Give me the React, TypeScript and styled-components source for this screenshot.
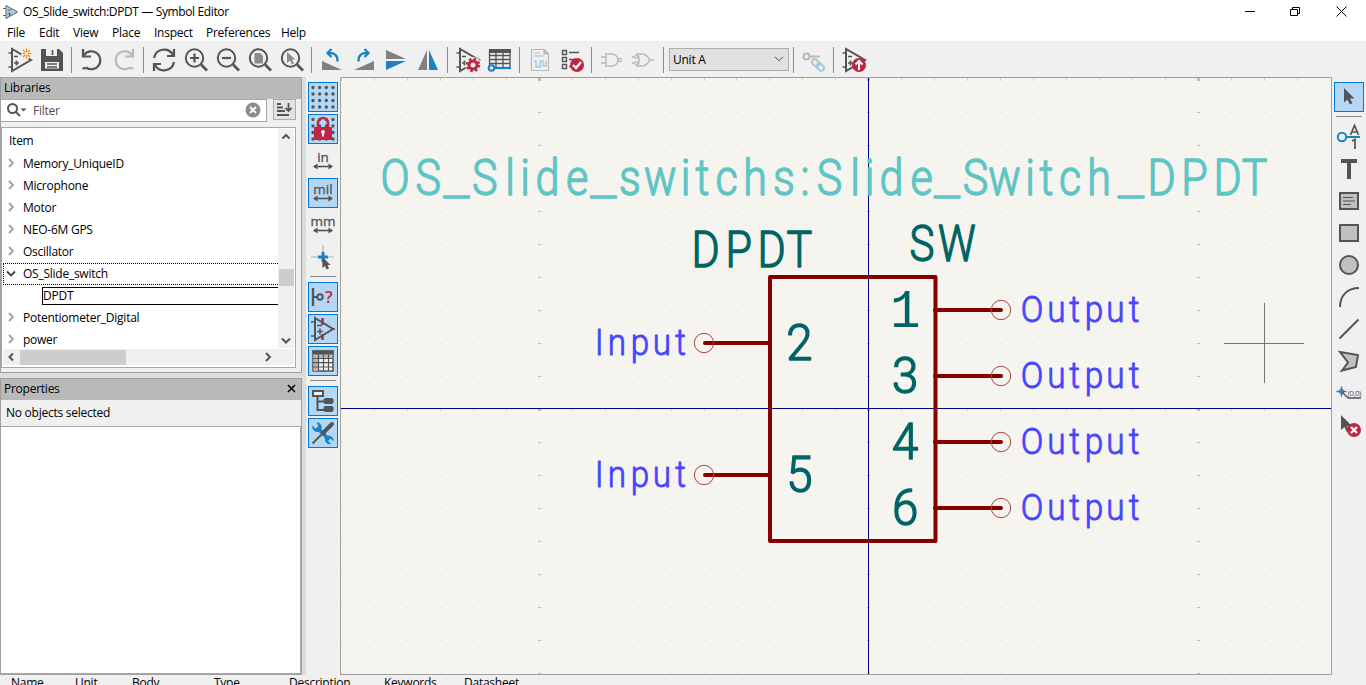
import React from 'react';
import styled, { createGlobalStyle } from 'styled-components';

const DARK = '#545454';
const BLUE = '#1a81c4';
const RED = '#bf2641';

const GlobalStyle = createGlobalStyle`
  * { box-sizing: border-box; }
  body {
    margin: 0;
    overflow: hidden;
    font-family: 'Open Sans', 'Noto Sans', sans-serif;
    font-size: 12px;
    letter-spacing: -0.25px;
    color: #000;
  }
  svg { display: block; flex: none; }
`;

const Window = styled.div`
  width: 1366px;
  height: 685px;
  display: flex;
  flex-direction: column;
  background: #f0f0f0;
  overflow: hidden;
`;

const TitleBar = styled.header`
  height: 23px;
  flex: none;
  display: flex;
  align-items: center;
  background: #fff;
  padding-left: 3px;
`;

const Title = styled.span`
  margin-left: 5px;
  flex: 1;
  white-space: nowrap;
  letter-spacing: -0.37px;
`;

const MenuBar = styled.nav`
  height: 18px;
  flex: none;
  display: flex;
  background: #fff;
`;

const MenuItem = styled.span<{ $w: number }>`
  width: ${(p) => p.$w}px;
  line-height: 19px;
  padding-left: 7px;
  white-space: nowrap;
`;

const TopToolbar = styled.div`
  height: 36px;
  flex: none;
  display: flex;
  align-items: center;
  padding: 2px 0 0 4px;
`;

const VSeparator = styled.i`
  width: 1px;
  height: 26px;
  margin: 0 4px 0 3px;
  background: #8c8c8c;
`;

const HSeparator = styled.i`
  height: 1px;
  width: 26px;
  margin: 3px 0 4px;
  background: #8c8c8c;
`;

const ToolButton = styled.span<{ $active?: boolean }>`
  width: 32px;
  height: 32px;
  flex: none;
  display: flex;
  align-items: center;
  justify-content: center;
  background: ${(p) => (p.$active ? '#b3d7f5' : 'transparent')};
  background-clip: content-box;
  padding: 1px;
  box-shadow: ${(p) => (p.$active ? 'inset 0 0 0 1px #f0f0f0, inset 0 0 0 2px #0078d7' : 'none')};
  svg { margin: -1px; }
`;

const UnitSelect = styled.div`
  width: 120px;
  height: 23px;
  margin: -2px 1px 0;
  padding: 0 4px 0 3px;
  display: flex;
  align-items: center;
  justify-content: space-between;
  background: #e1e1e1;
  border: 1px solid #adadad;
`;

const Body = styled.main`
  height: 598px;
  flex: none;
  display: flex;
`;

const SideColumn = styled.aside`
  width: 306px;
  display: flex;
  flex-direction: column;
  gap: 5px;
  background: #dcdcdc;
  padding-right: 4px;
`;

const Panel = styled.section<{ $h: number }>`
  height: ${(p) => p.$h}px;
  flex: none;
  display: flex;
  flex-direction: column;
  border: 1px solid #a0a0a0;
  background: #f0f0f0;
`;

const PanelHeader = styled.h2`
  height: 21px;
  flex: none;
  margin: 0;
  padding: 0 5px 2px 3px;
  display: flex;
  align-items: center;
  justify-content: space-between;
  font-size: 12px;
  font-weight: 400;
  background: #b9b9b9;
`;

const FilterRow = styled.div`
  display: flex;
  align-items: center;
  height: 23px;
  gap: 6px;
`;

const FilterField = styled.div`
  width: 266px;
  height: 23px;
  display: flex;
  align-items: center;
  padding: 0 5px 1px 5px;
  background: #fff;
  border: 1px solid #a8a8a8;
  border-left: 0;
  color: #4d4d4d;
`;

const FilterText = styled.span`
  flex: 1;
  margin-left: 6px;
`;

const SortButton = styled.div`
  width: 23px;
  height: 21px;
  margin-top: -2px;
  background: #e3e3e3;
  border: 1px solid #adadad;
`;

const ListBox = styled.div`
  width: 295px;
  height: 241px;
  margin-top: 5px;
  border: 1px solid #a5a8ad;
  background: #fff;
  padding: 1px;
  display: flex;
  flex-direction: column;
`;

const ListTop = styled.div`
  display: flex;
  height: 220px;
`;

const Tree = styled.div`
  width: 275px;
  height: 220px;
  overflow: hidden;
`;

const TreeHead = styled.div`
  height: 24px;
  padding-left: 6px;
  line-height: 23px;
`;

const TreeRow = styled.div<{ $focused?: boolean }>`
  height: 22px;
  display: flex;
  align-items: center;
  border: 1px dotted ${(p) => (p.$focused ? '#000' : 'transparent')};
  border-right: 0;
  svg { margin: -1px 0 1px -1px; }
`;

const RowLabel = styled.span`
  margin: -2px 0 0 4px;
`;

const ChildRow = styled.div`
  height: 18px;
  margin: 2px 0 2px 39px;
  border: 1px solid #000;
  border-right: 0;
  line-height: 15px;
`;

const VScroll = styled.div`
  width: 16px;
  height: 219px;
  background: #f0f0f0;
  display: flex;
  flex-direction: column;
  align-items: center;
  justify-content: space-between;
`;

const VThumb = styled.i`
  width: 15px;
  height: 17px;
  margin-top: 77px;
  background: #cdcdcd;
`;

const HScroll = styled.div`
  height: 16px;
  width: 291px;
  background: #f0f0f0;
  display: flex;
  align-items: center;
`;

const HThumb = styled.i`
  width: 106px;
  height: 15px;
  margin: 0 134px 0 1px;
  background: #cdcdcd;
`;

const Notice = styled.div`
  height: 26px;
  flex: none;
  padding-left: 5px;
  line-height: 26px;
`;

const PropertyGrid = styled.div`
  flex: 1;
  background: #fff;
  border: 1px solid #a5a8ad;
  border-left: 0;
`;

const SideToolbar = styled.div<{ $w: number }>`
  width: ${(p) => p.$w}px;
  flex: none;
  padding-top: 4px;
  display: flex;
  flex-direction: column;
  align-items: center;
`;

const Canvas = styled.div`
  width: 992px;
  height: 598px;
  flex: none;
  overflow: hidden;
`;

const StatusBar = styled.footer`
  height: 10px;
  flex: none;
  display: flex;
  overflow: hidden;
  padding-left: 11px;
`;

const StatusField = styled.span<{ $w: number }>`
  width: ${(p) => p.$w}px;
  line-height: 16px;
  white-space: nowrap;
`;

/* ---------- icons: a 32px cell each ---------- */

const Cell = ({ children, faded }: { children: React.ReactNode; faded?: boolean }) => (
  <svg width="32" height="32" viewBox="0 0 32 32" fill="none" stroke={DARK} strokeWidth="2" opacity={faded ? 0.35 : 1}>
    {children}
  </svg>
);

const OpAmp = () => (
  <>
    <path d="M8 5v22L27 16z" />
    <path d="M4.500 9H8M4.500 23H8M10 12.500h4M10 19h5M12.500 16.500v5" strokeWidth="1.700" />
  </>
);

const GridDots = () => (
  <path
    d="M6 6.500h24M6 13h24M6 19.500h24M6 26h24"
    strokeWidth="3.400"
    strokeLinecap="round"
    strokeDasharray="0 6.650"
  />
);

const icons: Record<string, React.ReactNode> = {
  newSymbol: (
    <Cell>
      <OpAmp />
      <circle cx="22.500" cy="9.500" r="5.500" fill="#f0f0f0" stroke="none" />
      <path d="M22.500 4.500v10M17.500 9.500h10M19 6l7 7M26 6l-7 7" stroke="#f29100" strokeWidth="1.200" />
      <circle cx="22.500" cy="9.500" r="1.500" fill="#fff" stroke="none" />
    </Cell>
  ),
  save: (
    <Cell>
      <path d="M5 5h18l4 4v18H5z" fill={DARK} stroke="none" />
      <path d="M10 5h11v7H10zM9 18h14v6.500H9z" fill="#f0f0f0" stroke="none" />
      <path d="M16.500 6v5M11 20h10M11 23h10" strokeWidth="1.700" />
    </Cell>
  ),
  undo: (
    <Cell>
      <path d="M8 11A9 9 0 1 1 10 23.500M7 5v7.500h8M6.500 24.300L12 24" strokeWidth="2.200" />
    </Cell>
  ),
  redo: (
    <Cell faded>
      <path d="M24 11A9 9 0 1 0 22 23.500M25 5v7.500h-8M25.500 24.300L20 24" strokeWidth="2.200" />
    </Cell>
  ),
  refresh: (
    <Cell>
      <path d="M6 14A10.200 10.200 0 0 1 25 11M26 18A10.200 10.200 0 0 1 7 21" strokeWidth="2.200" />
      <path d="M26 5v7h-7M6 27v-7h7" strokeWidth="2.200" />
    </Cell>
  ),
  zoomIn: (
    <Cell>
      <circle cx="14.500" cy="14" r="8.700" />
      <path d="M21 20.500l6 6" strokeWidth="2.700" />
      <path d="M14.500 9.500v9M10 14h9" strokeWidth="2.200" />
    </Cell>
  ),
  zoomOut: (
    <Cell>
      <circle cx="14.500" cy="14" r="8.700" />
      <path d="M21 20.500l6 6" strokeWidth="2.700" />
      <path d="M10 14h9" strokeWidth="2.200" />
    </Cell>
  ),
  zoomPage: (
    <Cell>
      <circle cx="14.500" cy="14" r="8.700" />
      <path d="M21 20.500l6 6" strokeWidth="2.700" />
      <path d="M10.500 9h5.500l3 3v7.500h-8.500z" fill="#8c8c8c" stroke="none" />
    </Cell>
  ),
  zoomPointer: (
    <Cell>
      <circle cx="14.500" cy="14" r="8.700" />
      <path d="M21 20.500l6 6" strokeWidth="2.700" />
      <path d="M11 8v11l3-2.500 2 4 2-1-2-4h3.500z" fill="#8c8c8c" stroke="none" />
    </Cell>
  ),
  rotateLeft: (
    <Cell>
      <path d="M6 17v9h20z" fill="#808080" stroke="none" />
      <path d="M21.500 17.500c.500-6-3-9-9-8.500M15.500 5l-4 4 4 4" stroke={BLUE} strokeWidth="2.300" />
    </Cell>
  ),
  rotateRight: (
    <Cell>
      <path d="M26 17v9H6z" fill="#808080" stroke="none" />
      <path d="M10.500 17.500c-.500-6 3-9 9-8.500M16.500 5l4 4-4 4" stroke={BLUE} strokeWidth="2.300" />
    </Cell>
  ),
  flipV: (
    <Cell>
      <path d="M6 6v9h20z" fill="#808080" stroke="none" />
      <path d="M6 26v-9h20z" fill={BLUE} stroke="none" />
    </Cell>
  ),
  flipH: (
    <Cell>
      <path d="M15 6v20H6z" fill="#808080" stroke="none" />
      <path d="M17 6v20h9z" fill={BLUE} stroke="none" />
    </Cell>
  ),
  symbolProps: (
    <Cell>
      <OpAmp />
      <circle cx="21" cy="21" r="4" stroke="#f0f0f0" strokeWidth="8" />
      <circle cx="21" cy="21" r="6" stroke={RED} strokeWidth="2.500" strokeDasharray="2.400 2.310" />
      <circle cx="21" cy="21" r="4" stroke={RED} strokeWidth="3" />
    </Cell>
  ),
  pinTable: (
    <Cell>
      <path d="M5.500 6v18M26 6v17M12 6v17M19 6v17M5 11.500h21M5 15.500h21M5 19.500h21" strokeWidth="1.300" />
      <path d="M5 5h22v4H5z" fill={DARK} stroke="none" />
      <path d="M10 24h17" stroke={BLUE} strokeWidth="2.300" />
      <circle cx="7.500" cy="24" r="2.800" fill="#f0f0f0" stroke={BLUE} />
    </Cell>
  ),
  datasheet: (
    <Cell faded>
      <path d="M7.500 5.500h13l4 4v17h-17zM20 5v5h5" strokeWidth="1.200" />
      <path d="M20 5v5h5z" fill={DARK} stroke="none" />
      <path d="M10 9h6M10 12h10" strokeWidth="1.200" />
      <path d="M10 17h2v6h4v-6h3v5h3v-4h1" stroke={BLUE} strokeWidth="1.500" />
    </Cell>
  ),
  erc: (
    <Cell>
      <path d="M6.500 6.500h4v4h-4zM6.500 13.500h4v4h-4zM6.500 20.500h4v4h-4z" strokeWidth="1.400" />
      <path d="M13 8.500h10M13 15.500h7M13 22.500h4" strokeWidth="1.400" />
      <circle cx="21" cy="21" r="7" fill={RED} stroke="none" />
      <path d="M17 21l3 3 5-6" stroke="#fff" strokeWidth="2.300" />
    </Cell>
  ),
  andGate: (
    <Cell faded>
      <path d="M10 10h6a6 6 0 0 1 0 12h-6zM5 13h5M5 19h5" strokeWidth="1.400" />
      <circle cx="23.700" cy="16" r="1.600" strokeWidth="1.300" />
    </Cell>
  ),
  orGate: (
    <Cell faded>
      <path d="M9 10h6c3 0 5 3 7 6-2 3-4 6-7 6H9c3-4 3-8 0-12zM4 13h2M4 19h2M22 16h4" strokeWidth="1.400" />
      <circle cx="8" cy="13" r="1.500" strokeWidth="1.200" />
      <circle cx="8" cy="19" r="1.500" strokeWidth="1.200" />
    </Cell>
  ),
  syncPins: (
    <Cell faded>
      <circle cx="8.500" cy="12.500" r="3" />
      <path d="M11.500 12.500H22" />
      <g stroke={BLUE}>
        <rect x="13.500" y="16" width="8" height="5.500" rx="2.700" transform="rotate(42 17.500 19)" />
        <rect x="18.500" y="20.500" width="8" height="5.500" rx="2.700" transform="rotate(42 22.500 23)" />
      </g>
    </Cell>
  ),
  export: (
    <Cell>
      <OpAmp />
      <circle cx="21" cy="21" r="7" fill={RED} stroke="none" />
      <path d="M21 26v-8M17.500 20.500l3.500-3.500 3.500 3.500" stroke="#fff" />
    </Cell>
  ),
  grid: (
    <Cell>
      <GridDots />
    </Cell>
  ),
  gridLock: (
    <Cell>
      <GridDots />
      <path d="M11 15v-5a5 5 0 0 1 10 0v5" stroke={RED} strokeWidth="2.600" />
      <rect x="7" y="14" width="18" height="13" rx="1" fill={RED} stroke="none" />
      <circle cx="16" cy="19" r="1.900" fill="#e4eefa" stroke="none" />
      <path d="M16 19v4.500" stroke="#e4eefa" />
    </Cell>
  ),
  cursorShape: (
    <Cell>
      <path d="M16 4v22M4 16h23" stroke="#b0b0b0" strokeWidth="1.200" />
      <path d="M16 11v10M11 16h10" stroke={BLUE} strokeWidth="3" />
      <path d="M15.500 16v11l2.500-2 1.500 3.500 2.500-1-1.500-3.500h3z" fill={DARK} stroke="none" />
    </Cell>
  ),
  pinType: (
    <Cell>
      <path d="M6 7v18" strokeWidth="2.400" />
      <path d="M6 16h4" />
      <circle cx="13" cy="16" r="2.700" />
      <text x="18" y="22" fontFamily="Open Sans" fontWeight="600" fontSize="17" fill={RED} stroke="none">?</text>
    </Cell>
  ),
  hiddenPins: (
    <Cell>
      <path d="M15.500 5v7M15.500 21v6" stroke={RED} strokeWidth="2.500" />
      <path d="M8 5v22L26 16z" />
      <path d="M4 9h4M4 23h4M24 16h4M10 12.500h5M10 18.500h6M13 15.500v6" strokeWidth="1.600" />
    </Cell>
  ),
  table: (
    <Cell>
      <rect x="6" y="6" width="20" height="20" fill="#f5f5f5" strokeWidth="1.500" />
      <path d="M6.500 9h19v4.500H11.500V26h-5z" fill="#b9b9b9" stroke="none" />
      <path d="M5.500 7.500h21" strokeWidth="4" />
      <path d="M11.500 7v19M16.500 7v19M21.500 7v19M6 13.500h20M6 17.700h20M6 22h20" strokeWidth="1.200" />
    </Cell>
  ),
  treeView: (
    <Cell>
      <path d="M10.500 11v14H18M10.500 16.500H18" />
      <rect x="6" y="6" width="10" height="5" fill="#f5f5f5" />
      <path d="M18 13h7l1.500 1.500v3L25 19h-7l-1.500-1.500v-3z" fill={DARK} stroke="none" />
      <path d="M18 21h7l1.500 1.500v3L25 27h-7l-1.500-1.500v-3z" fill={DARK} stroke="none" />
    </Cell>
  ),
  tools: (
    <Cell>
      <path
        d="M9.500 5.300a5.300 5.300 0 0 1 5 7.200l6 6a5.300 5.300 0 0 1 6.200 6l-3-3-2.600 2.600 3 3a5.300 5.300 0 0 1-6.200-6.200l-6-6a5.300 5.300 0 0 1-6.500-6.300l3.200 3.200 2.700-2.700z"
        fill={BLUE}
        stroke="none"
      />
      <path d="M5.500 26.500l11-11" strokeWidth="1.800" />
      <path d="M16 16l9-9" strokeWidth="4" strokeLinecap="round" />
    </Cell>
  ),
  pointer: (
    <Cell>
      <path d="M11 7v14.500l3.500-3 2.300 5 2.600-1.200-2.400-4.800h4.500z" fill={DARK} stroke="none" />
    </Cell>
  ),
  addPin: (
    <Cell>
      <circle cx="9" cy="16" r="4.200" stroke={BLUE} />
      <path d="M13 16h14" stroke={BLUE} />
      <path d="M17.500 14L21.500 4.500 25.500 14M19 11h5M19 20l3-1.500V28" strokeWidth="1.700" />
    </Cell>
  ),
  addText: (
    <Cell>
      <path d="M8 8h16M16 8v18" strokeWidth="4" />
    </Cell>
  ),
  textBox: (
    <Cell>
      <rect x="7" y="8" width="18" height="16" fill="#c0c0c0" />
      <path d="M10 12.500h10M10 16h12M10 19.500h8" strokeWidth="1.200" />
    </Cell>
  ),
  rect: (
    <Cell>
      <rect x="7" y="8" width="18" height="16" fill="#c0c0c0" />
    </Cell>
  ),
  circle: (
    <Cell>
      <circle cx="16" cy="16" r="9" fill="#c0c0c0" />
    </Cell>
  ),
  arc: (
    <Cell>
      <path d="M7 26C7 15 14 7 26 7" />
    </Cell>
  ),
  line: (
    <Cell>
      <path d="M6.500 25.500l19-19" />
    </Cell>
  ),
  polygon: (
    <Cell>
      <path d="M7 7l18 3-2 12-14 3.500 6-8z" fill="#c0c0c0" />
    </Cell>
  ),
  anchor: (
    <Cell>
      <path d="M8.500 9.500v10M3.500 14.500h10" stroke={BLUE} strokeWidth="1.500" />
      <circle cx="8.500" cy="14.500" r="2.300" stroke={BLUE} strokeWidth="1" />
      <path d="M9 15l6 6h13" strokeWidth="1.300" />
      <text x="14.500" y="19" fontFamily="Open Sans" fontSize="8" letterSpacing="-.500" fill={DARK} stroke="none">(0,0)</text>
    </Cell>
  ),
  deleteTool: (
    <Cell>
      <path d="M8 6v15l3.500-3 2.300 5 2.600-1.200-2.400-4.800h5z" fill={DARK} stroke="none" />
      <circle cx="21" cy="21" r="7" fill={RED} stroke="none" />
      <path d="M18 18l6 6M24 18l-6 6" stroke="#fff" strokeWidth="2.200" />
    </Cell>
  ),
};

const unitIcon = (label: string) => (
  <Cell>
    <text x="16" y="17" textAnchor="middle" fontFamily="Open Sans" fontSize="13.500" fontWeight="500" fill={DARK} stroke={DARK} strokeWidth=".3" letterSpacing="0">
      {label}
    </text>
    <path d="M7 21.500h18" strokeWidth="1.600" />
    <path d="M10.500 18.500L6 21.500l4.500 3zM21.500 18.500l4.500 3-4.500 3z" fill={DARK} stroke="none" />
  </Cell>
);
icons.inches = unitIcon('in');
icons.mils = unitIcon('mil');
icons.mm = unitIcon('mm');

const Tools = ({ names, active = [] }: { names: string[]; active?: string[] }) => (
  <>
    {names.map((n) => (
      <ToolButton key={n} $active={active.includes(n)}>
        {icons[n]}
      </ToolButton>
    ))}
  </>
);

const Chevron = ({ dir, color = '#555', w = 2 }: { dir: 'up' | 'down' | 'left' | 'right'; color?: string; w?: number }) => {
  const d = {
    up: 'M4.500 9.500L8 6l3.500 3.500',
    down: 'M4 6.500l4 4 4-4',
    left: 'M10 4.500L6.500 8l3.500 3.500',
    right: 'M6 4l4 4-4 4',
  }[dir];
  return (
    <svg width="16" height="16" viewBox="0 0 16 16" fill="none" stroke={color} strokeWidth={w}>
      <path d={d} />
    </svg>
  );
};

/* ---------- schematic sheet, in window coordinates ---------- */

type LetteringProps = {
  text: string;
  centers: number[];
  y: number;
  size: number;
  squeeze: number;
  color: string;
  weight?: number;
};

const Lettering = ({ text, centers, y, size, squeeze, color, weight = 1.4 }: LetteringProps) => (
  <text
    transform={`scale(${squeeze} 1)`}
    textAnchor="middle"
    fontFamily="Roboto"
    fontWeight="300"
    fontSize={size}
    letterSpacing="0"
    fill={color}
    stroke={color}
    strokeWidth={weight}
    strokeLinejoin="round"
  >
    {text.split('').map((c, i) => {
      const wide = c === '_';
      const footed = c === '1';
      return (
        <tspan
          key={i}
          x={centers[i] / squeeze}
          y={wide ? y - 8.5 : y}
          fontFamily={wide ? 'DejaVu Sans Mono' : footed ? 'Liberation Mono' : 'Roboto'}
          fontWeight={footed ? 400 : 300}
          fontSize={footed ? size * 1.06 : size}
          strokeWidth={footed ? 0 : weight}
        >
          {c}
        </tspan>
      );
    })}
  </text>
);

const TEAL = '#5fc4c4';
const GREEN = '#006464';
const PIN = '#840000';
const NAME = '#4646ff';

const libId = 'OS_Slide_switchs:Slide_Switch_DPDT';
const libIdCenters = [
  395, 428.3, 456.5, 484.7, 510, 525.2, 547.5, 577, 603.5, 630, 660.3, 685.5, 702.5, 726.5, 755, 784, 805,
  829.5, 855, 869.5, 891.5, 921.5, 947, 975.5, 1004.5, 1030, 1046.5, 1070, 1099, 1131, 1161.5, 1194.5, 1227.5, 1254.5,
];

const outputs = [
  { n: '1', y: 310 },
  { n: '3', y: 376 },
  { n: '4', y: 442 },
  { n: '6', y: 508 },
];
const inputs = [
  { n: '2', y: 343 },
  { n: '5', y: 475 },
];

const columns = Array.from({ length: 30 }, (_, i) => i - 1);
const rows = Array.from({ length: 19 }, (_, i) => i);

const Sheet = () => (
  <svg width="992" height="598" viewBox="340 77 992 598" fill="none">
    <rect x="340" y="77" width="992" height="598" fill="#f5f4ef" />
    {rows.map((r) =>
      columns.map((c) => {
        const major = (c - 5) % 10 === 0;
        const tall = r === 0 || r === 10;
        return (
          <rect
            key={`${r}-${c}`}
            x={Math.round(374 + c * 32.95) - (major ? 1 : 0)}
            y={Math.round(79 + r * 33) - (tall ? 1 : 0)}
            width={major ? 3 : 1}
            height={tall ? 3 : 1}
            fill={major ? '#bdbdba' : '#d2d1cd'}
          />
        );
      }),
    )}
    <path d="M868.500 77V675M340 408.500H1332" stroke="#000084" />
    <Lettering text={libId} centers={libIdCenters} y={194.7} size={50} squeeze={0.86} color={TEAL} />
    <Lettering text="DPDT" centers={[705.5, 738.7, 771.5, 799.3]} y={267.5} size={50} squeeze={0.86} color={GREEN} />
    <Lettering text="SW" centers={[922, 956.8]} y={261} size={50} squeeze={0.84} color={GREEN} />
    <rect x="770" y="277" width="165.500" height="264" stroke={PIN} strokeWidth="4" strokeLinejoin="round" />
    {outputs.map((p) => (
      <g key={p.n}>
        <path d={`M935 ${p.y}H1001`} stroke={PIN} strokeWidth="4" strokeLinecap="round" />
        <circle cx="1001" cy={p.y} r="9.700" stroke="#a84444" />
        <Lettering text={p.n} centers={[905.3]} y={p.y + 16.7} size={50} squeeze={0.95} color={GREEN} />
        <Lettering text="Output" centers={[1032, 1056.5, 1074.5, 1094, 1115.5, 1134]} y={p.y + 12} size={37} squeeze={0.9} color={NAME} weight={0.9} />
      </g>
    ))}
    {inputs.map((p) => (
      <g key={p.n}>
        <path d={`M770 ${p.y}H705`} stroke={PIN} strokeWidth="4" strokeLinecap="round" />
        <circle cx="704" cy={p.y} r="9.700" stroke="#a84444" />
        <Lettering text={p.n} centers={[799.3]} y={p.y + 16.7} size={50} squeeze={0.95} color={GREEN} />
        <Lettering text="Input" centers={[599.3, 617, 640, 662, 680.7]} y={p.y + 12} size={37} squeeze={0.9} color={NAME} weight={0.9} />
      </g>
    ))}
    <path d="M1264.500 303V383M1224 343.500H1304" stroke="#77776f" />
    <path d="M340.500 675V77.500H1331.500V674.500H340" stroke="#a0a0a0" />
  </svg>
);

const before = ['Memory_UniqueID', 'Microphone', 'Motor', 'NEO-6M GPS', 'Oscillator'];
const after = ['Potentiometer_Digital', 'power'];

const Branch = ({ label }: { label: string }) => (
  <TreeRow>
    <Chevron dir="right" color="#a0a0a0" w={1.8} />
    <RowLabel>{label}</RowLabel>
  </TreeRow>
);

const App = () => (
  <Window>
    <GlobalStyle />
    <TitleBar>
      <svg width="15" height="16" viewBox="0 0 15 16">
        <path d="M3 1.500v13L14.500 8z" fill="#b8cbd8" stroke="#5b6770" />
        <path d="M0 4.500h3M0 11.500h3M5 6h3" stroke="#5b6770" />
        <path d="M4.500 10h4M6.500 8v4" stroke={BLUE} />
      </svg>
      <Title>OS_Slide_switch:DPDT — Symbol Editor</Title>
      <svg width="121" height="22" viewBox="1245 0 121 22" fill="none" stroke="#000">
        <path d="M1245 10.500h10M1290.500 8.500h7v6h-7zM1292.500 8V6.500h7v6H1298M1336.500 5.500l10 10M1346.500 5.500l-10 10" />
      </svg>
    </TitleBar>
    <MenuBar>
      <MenuItem $w={32}>File</MenuItem>
      <MenuItem $w={34}>Edit</MenuItem>
      <MenuItem $w={39}>View</MenuItem>
      <MenuItem $w={42}>Place</MenuItem>
      <MenuItem $w={52}>Inspect</MenuItem>
      <MenuItem $w={75}>Preferences</MenuItem>
      <MenuItem $w={40}>Help</MenuItem>
    </MenuBar>
    <TopToolbar>
      <Tools names={['newSymbol', 'save']} />
      <VSeparator />
      <Tools names={['undo', 'redo']} />
      <VSeparator />
      <Tools names={['refresh', 'zoomIn', 'zoomOut', 'zoomPage', 'zoomPointer']} />
      <VSeparator />
      <Tools names={['rotateLeft', 'rotateRight', 'flipV', 'flipH']} />
      <VSeparator />
      <Tools names={['symbolProps', 'pinTable']} />
      <VSeparator />
      <Tools names={['datasheet', 'erc']} />
      <VSeparator />
      <Tools names={['andGate', 'orGate']} />
      <VSeparator />
      <UnitSelect>
        Unit A
        <svg width="10" height="6" viewBox="0 0 10 6" fill="none" stroke="#444">
          <path d="M1 .800l4 4 4-4" />
        </svg>
      </UnitSelect>
      <VSeparator />
      <Tools names={['syncPins']} />
      <VSeparator />
      <Tools names={['export']} />
    </TopToolbar>
    <Body>
      <SideColumn>
        <Panel $h={296}>
          <PanelHeader>Libraries</PanelHeader>
          <FilterRow>
            <FilterField>
              <svg width="21" height="16" viewBox="0 0 21 16" fill="none" stroke="#555" strokeWidth="2">
                <circle cx="6.500" cy="6.500" r="4.500" />
                <path d="M10 10l4 4" />
                <path d="M14.500 6.500h6l-3 3z" fill="#555" stroke="none" />
              </svg>
              <FilterText>Filter</FilterText>
              <svg width="16" height="16" viewBox="0 0 16 16">
                <circle cx="8" cy="8" r="7.500" fill="#8c8c8c" />
                <path d="M5 5l6 6M11 5l-6 6" stroke="#fff" strokeWidth="1.800" />
              </svg>
            </FilterField>
            <SortButton>
              <svg width="21" height="19" viewBox="0 0 21 19" fill="none" stroke={DARK} strokeWidth="1.800">
                <path d="M3 4h4M3 7.500h6M3 11h8M3 15h12M14.500 3v8M11.500 8l3 3 3-3" />
              </svg>
            </SortButton>
          </FilterRow>
          <ListBox>
            <ListTop>
              <Tree>
                <TreeHead>Item</TreeHead>
                {before.map((t) => (
                  <Branch key={t} label={t} />
                ))}
                <TreeRow $focused>
                  <Chevron dir="down" color="#404040" w={1.8} />
                  <RowLabel>OS_Slide_switch</RowLabel>
                </TreeRow>
                <ChildRow>DPDT</ChildRow>
                {after.map((t) => (
                  <Branch key={t} label={t} />
                ))}
              </Tree>
              <VScroll>
                <Chevron dir="up" />
                <VThumb />
                <Chevron dir="down" />
              </VScroll>
            </ListTop>
            <HScroll>
              <Chevron dir="left" />
              <HThumb />
              <Chevron dir="right" />
            </HScroll>
          </ListBox>
        </Panel>
        <Panel $h={297}>
          <PanelHeader>
            Properties
            <svg width="9" height="9" viewBox="0 0 9 9" stroke="#000" strokeWidth="1.600">
              <path d="M1 1l7 7M8 1L1 8" />
            </svg>
          </PanelHeader>
          <Notice>No objects selected</Notice>
          <PropertyGrid />
        </Panel>
      </SideColumn>
      <SideToolbar $w={34}>
        <Tools
          names={['grid', 'gridLock', 'inches', 'mils', 'mm', 'cursorShape']}
          active={['grid', 'gridLock', 'mils']}
        />
        <HSeparator />
        <Tools names={['pinType', 'hiddenPins', 'table']} active={['pinType', 'hiddenPins', 'table']} />
        <HSeparator />
        <Tools names={['treeView', 'tools']} active={['treeView', 'tools']} />
      </SideToolbar>
      <Canvas>
        <Sheet />
      </Canvas>
      <SideToolbar $w={34}>
        <Tools names={['pointer']} active={['pointer']} />
        <HSeparator />
        <Tools
          names={['addPin', 'addText', 'textBox', 'rect', 'circle', 'arc', 'line', 'polygon', 'anchor', 'deleteTool']}
        />
      </SideToolbar>
    </Body>
    <StatusBar>
      <StatusField $w={64}>Name</StatusField>
      <StatusField $w={57}>Unit</StatusField>
      <StatusField $w={82}>Body</StatusField>
      <StatusField $w={75}>Type</StatusField>
      <StatusField $w={95}>Description</StatusField>
      <StatusField $w={80}>Keywords</StatusField>
      <StatusField $w={80}>Datasheet</StatusField>
    </StatusBar>
  </Window>
);

export default App;
